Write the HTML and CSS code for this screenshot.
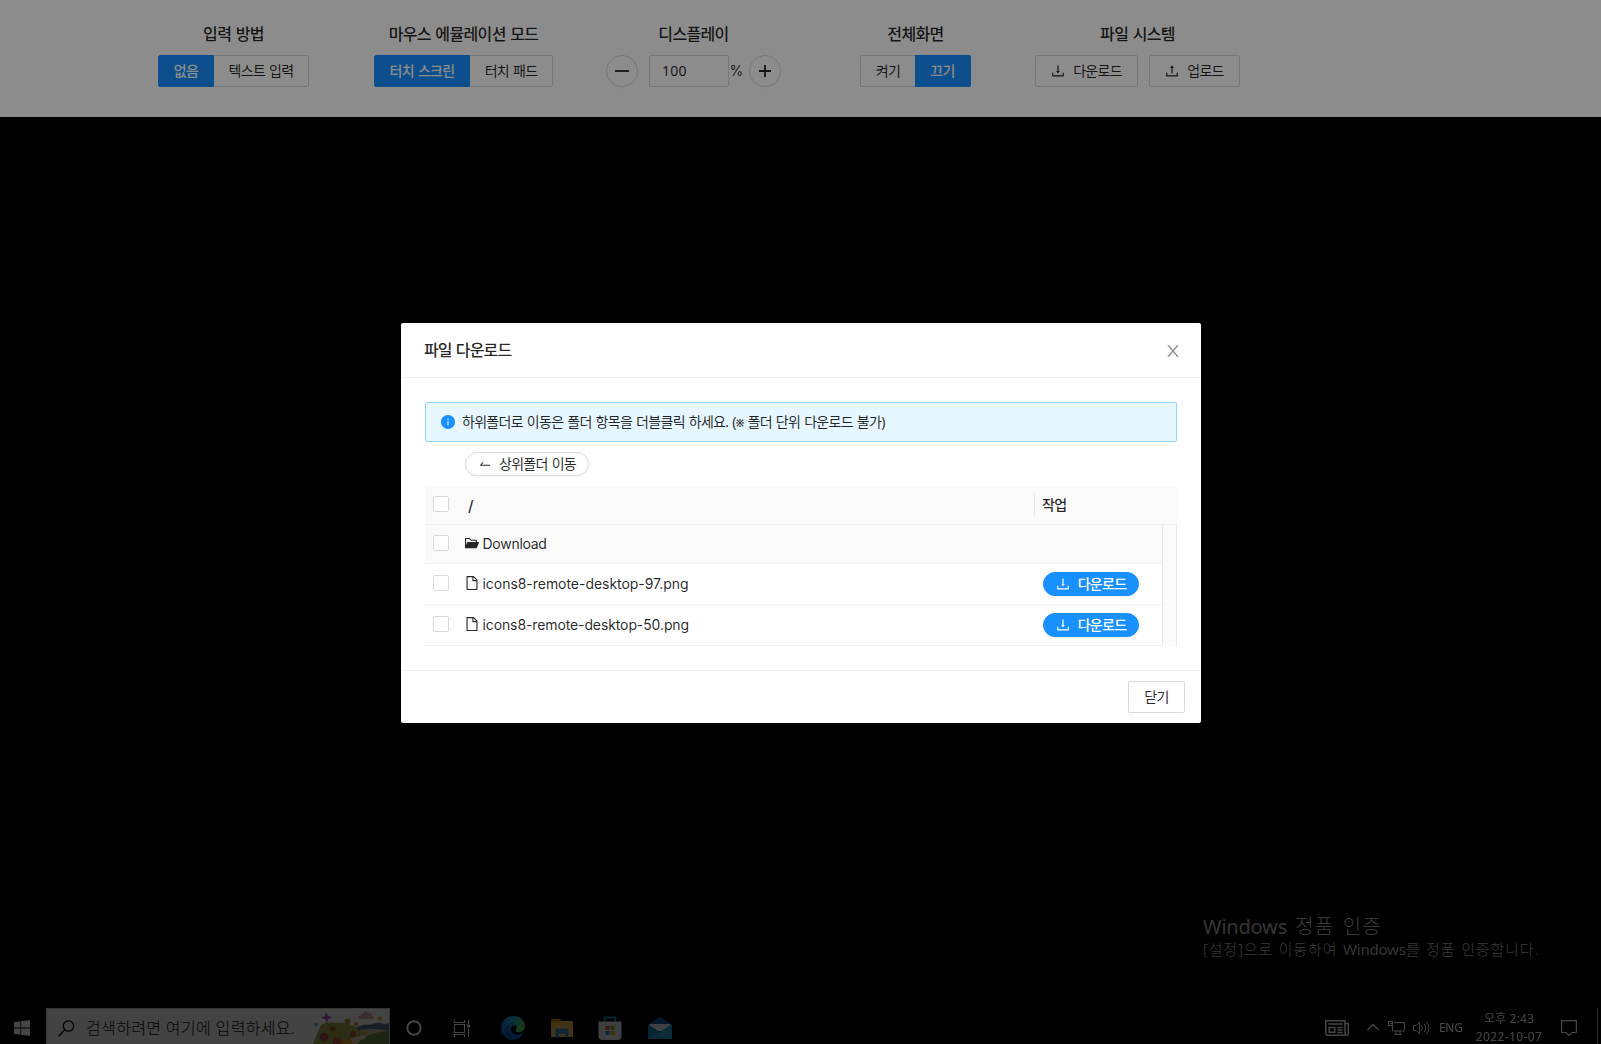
FILE: index.html
```html
<!DOCTYPE html>
<html lang="ko">
<head>
<meta charset="utf-8">
<title>파일 다운로드</title>
<link rel="stylesheet" href="styles.css">
</head>
<body>
<svg class="defs" width="0" height="0">
  <symbol id="tray-down" viewBox="64 64 896 896"><path d="M505.7 661a8 8 0 0012.6 0l112-141.7c4.1-5.2.4-12.9-6.3-12.9h-74.1V168c0-4.4-3.6-8-8-8h-60c-4.4 0-8 3.6-8 8v338.3H400c-6.7 0-10.4 7.7-6.3 12.9l112 141.8zM878 626h-60c-4.4 0-8 3.6-8 8v154H214V634c0-4.4-3.6-8-8-8h-60c-4.4 0-8 3.6-8 8v198c0 17.7 14.3 32 32 32h684c17.7 0 32-14.3 32-32V634c0-4.4-3.6-8-8-8z"/></symbol>
  <symbol id="tray-up" viewBox="64 64 896 896"><path d="M400 317.7h73.9V656c0 4.4 3.6 8 8 8h60c4.4 0 8-3.6 8-8V317.7H624c6.7 0 10.4-7.7 6.3-12.9L518.3 163a8 8 0 00-12.6 0l-112 141.7c-4.1 5.3-.4 13 6.3 13zM878 626h-60c-4.4 0-8 3.6-8 8v154H214V634c0-4.4-3.6-8-8-8h-60c-4.4 0-8 3.6-8 8v198c0 17.7 14.3 32 32 32h684c17.7 0 32-14.3 32-32V634c0-4.4-3.6-8-8-8z"/></symbol>
  <symbol id="file" viewBox="64 64 896 896"><path d="M854.6 288.6L639.4 73.4c-6-6-14.1-9.4-22.6-9.4H192c-17.7 0-32 14.3-32 32v832c0 17.7 14.3 32 32 32h640c17.7 0 32-14.3 32-32V311.3c0-8.5-3.4-16.7-9.4-22.7zM790.2 326H602V137.8L790.2 326zm1.8 562H232V136h302v216a42 42 0 0042 42h216v494z"/></symbol>
</svg>
<div class="screen">
  <header class="toolbar">
    <section class="group g-input">
      <h2>입력 방법</h2>
      <div class="controls"><button class="seg first on w56">없음</button><button class="seg last w95">텍스트 입력</button></div>
    </section>
    <section class="group g-mouse">
      <h2>마우스 에뮬레이션 모드</h2>
      <div class="controls"><button class="seg first on w96">터치 스크린</button><button class="seg last w83">터치 패드</button></div>
    </section>
    <section class="group g-display">
      <h2>디스플레이</h2>
      <div class="controls">
        <button class="round"><svg width="16" height="16" viewBox="0 0 16 16"><path d="M1 8h14" stroke="currentColor" stroke-width="1.8"/></svg></button>
        <span class="scale">100</span><span class="percent">%</span>
        <button class="round"><svg width="16" height="16" viewBox="0 0 16 16"><path d="M2 8h12M8 2v12" stroke="currentColor" stroke-width="1.8"/></svg></button>
      </div>
    </section>
    <section class="group g-full">
      <h2>전체화면</h2>
      <div class="controls"><button class="seg first w55">켜기</button><button class="seg last on w56">끄기</button></div>
    </section>
    <section class="group g-files">
      <h2>파일 시스템</h2>
      <div class="controls files">
        <button class="btn w103"><svg class="ico"><use href="#tray-down"/></svg>다운로드</button>
        <button class="btn w91"><svg class="ico"><use href="#tray-up"/></svg>업로드</button>
      </div>
    </section>
  </header>

  <main class="desktop">
    <div class="watermark">
      <p class="wm-title"><span class="latin">Windows</span> 정품 인증</p>
      <p class="wm-text">[설정]으로 이동하여 <span class="latin">Windows</span>를 정품 인증합니다.</p>
    </div>
    <footer class="taskbar">
      <svg class="start" width="16" height="16" viewBox="0 0 16 16"><path fill="#fff" d="M0 2.2 6.4 1.3v6.3H0zM7.2 1.2 16 0v7.6H7.200zM0 8.400h6.400v6.300L0 13.800zM7.200 8.400H16V16l-8.800-1.200z"/></svg>
      <div class="search">
        <svg class="lens" width="17" height="17" viewBox="0 0 17 17" fill="none" stroke="#111" stroke-width="1.300"><circle cx="10.500" cy="6" r="5.200"/><path d="M6.700 9.800.6 16.200"/></svg>
        <span class="hint">검색하려면 여기에 입력하세요.</span>
        <svg class="scene" width="76" height="35" viewBox="0 0 76 35">
          <path fill="#5c708d" d="M42 19q10-5 15-3 8-4 14-1l6-1v14H42z"/>
          <path fill="#c9b99c" d="M40 22q20-4 37 0v13H36z"/>
          <path fill="#a0a44e" d="M0 35Q5 22 8 16q6-4 14-2 14-1 22 5 3 3 7 5-8 5-13 11z"/>
          <path fill="#6f8a46" d="M42 35q12-12 35-13v13z"/>
          <path fill="#dccbb0" d="M35 35q2-7 11-8 5-1 0-3l7 3q0 3-5 4l-4 4z"/>
          <path fill="#d9a0ad" d="M45 10q0-4 4-4 4-7 7-2 3 0 3 3 3 1 1 3z"/>
          <path fill="#ba48d6" d="m13 3 2 4 4 1-4 2-1 4-2-4-4-1 4-2z"/>
          <circle cx="3" cy="15.500" r="2" fill="#3fb6cb"/><circle cx="67" cy="9.500" r="2" fill="#eda812"/>
          <circle cx="34.500" cy="12.500" r="2.800" fill="#c08426"/><circle cx="43" cy="15" r="2" fill="#c9952b"/><circle cx="52" cy="24" r="2.500" fill="#c5a128"/>
          <circle cx="19.500" cy="20" r="2.800" fill="#a05a2c"/><circle cx="40" cy="25" r="3" fill="#a5592c"/>
          <circle cx="11" cy="28" r="4.300" fill="#ad4a4c"/><circle cx="24.500" cy="33" r="4.800" fill="#c0584a"/><circle cx="34" cy="36" r="6.500" fill="#dc9428"/>
        </svg>
      </div>
      <svg class="cortana" width="16" height="16" viewBox="0 0 16 16"><circle cx="8" cy="8" r="6.700" fill="none" stroke="#fff" stroke-width="2"/></svg>
      <svg class="taskview" width="18" height="17" viewBox="0 0 18 17" fill="none" stroke="#fff" stroke-width="1.100"><path d="M1.500 0v2.500h10V0M1.500 17v-2.500h10V17M1.500 4.500h10v8h-10zM15.500 0v4M15.500 9v8"/><path fill="#fff" stroke="none" d="M14 4.500h3v3h-3z"/></svg>
      <svg class="edge" width="24" height="24" viewBox="0 0 24 24">
        <defs><linearGradient id="eg" x1="0" y1="0" x2="1" y2=".5"><stop offset=".1" stop-color="#1b83d4"/><stop offset=".5" stop-color="#2bb2d8"/><stop offset="1" stop-color="#5fd04f"/></linearGradient><linearGradient id="eb" x1="0" y1="0" x2="0" y2="1"><stop offset="0" stop-color="#1689d8"/><stop offset="1" stop-color="#1169c4"/></linearGradient></defs>
        <path fill="url(#eb)" d="M0 11.500C1 6 6 4 10 5c5 1 6 5 5 7-1 2-1 3 0 4 2 2 6 1 8 0-2 5-6 8-11 8C5 24-.3 18 0 11.500z"/>
        <path fill="url(#eg)" d="M.1 11C1 4.500 6 0 12 0c7 0 12 5 12 10.500 0 4-3 5.800-6.500 5.800-2.500 0-3.500-1-2.500-2.300C17 9 13.500 6 9 6 5 6 1.500 8 .1 11z"/>
        <path fill="#12579f" d="M9.500 9.300C5 12 8 22 16 23.300 9 25.500 4 20 4 15.500c0-3 2.500-5.700 5.500-6.200z"/>
        <path fill="#000" d="M15 9.500q1 2-.3 4.200-.8 2 1.300 2.900 3 1 6.500-.8-3 4-8 2.700-5-2-4.500-6 .8-3.500 5-3z"/>
      </svg>
      <svg class="explorer" width="22" height="19" viewBox="0 0 22 19"><path fill="#c98b0a" d="M0 0h9l1.500 2H22v4H0z"/><path fill="#edbd58" d="M0 3.500h9L11 2h11v16H0z"/><path fill="#3b88cf" d="M4.500 18.500V11q0-1.500 1.500-1.500h10q1.500 0 1.500 1.500v7.500H14v-4H8v4z"/></svg>
      <svg class="store" width="24" height="24" viewBox="0 0 24 24"><path d="M6.500 6V1.500h11V6" fill="none" stroke="#168bc2" stroke-width="1.800"/><path fill="#e6e6e6" d="M.5 5.500h23V20q0 4-4 4h-15q-4 0-4-4z"/><path fill="#e8502d" d="M7.500 10h4v4h-4z"/><path fill="#78ad28" d="M12.500 10h4v4h-4z"/><path fill="#1696d2" d="M7.500 15h4v4h-4z"/><path fill="#e8ae20" d="M12.500 15h4v4h-4z"/></svg>
      <svg class="mail" width="24" height="22" viewBox="0 0 24 22"><path fill="#125aa0" d="M0 7.500 12 0l12 7.500V14H0z"/><path fill="#e8edf0" d="M2 7h20v7H2z"/><path fill="#2188bd" d="M0 7.500 12 15l12-7.500V22H0z"/><path fill="#2ba5d3" d="M24 7.500V22H0z"/><path fill="#e8edf0" d="m2 7.200 20 0L12 14.500z"/></svg>
      <div class="tray">
        <svg class="news" width="24" height="16" viewBox="0 0 24 16" fill="none" stroke="#fff" stroke-width="1.500"><path d="M20 15.200H2.500Q.8 15.200.8 13.500V.8H20v12.700q0 1.700 1.700 1.700t1.600-1.700V3.500H20M3.500 4h14M12.500 7.500h5M12.500 10h5M12.500 12.500h5"/><path d="M4.200 7.500h5.600v4.700H4.200z"/></svg>
        <svg class="chev" width="12" height="8" viewBox="0 0 12 8" fill="none" stroke="#fff" stroke-width="1.300"><path d="m.5 7 5.500-5.500L11.500 7"/></svg>
        <svg class="net" width="17" height="14" viewBox="0 0 17 14" fill="none" stroke="#fff"><path d="M6 1.500h10.500v8.500H4.500V5M8 10v3M12 10v3M6 13.500h8M.5.500h4v4h-4zM2 2.500h2"/></svg>
        <svg class="vol" width="17" height="14" viewBox="0 0 17 14" fill="none" stroke="#fff"><path d="M.5 4.500h2.500l3.500-3.500v12L3 9.500H.5zM8.500 4.500q2 2.500 0 5M11 2.800q3.400 4.200 0 8.400M13.500 1q5 6 0 12"/></svg>
        <span class="lang">ENG</span>
        <div class="clock"><span>오후 2:43</span><span class="date">2022-10-07</span></div>
        <svg class="note" width="16" height="17" viewBox="0 0 16 17" fill="none" stroke="#fff" stroke-width="1.200"><path d="M.6.600h14.800v11.900H11L8 15.500l-3-3H.6z"/></svg>
        <i class="peek"></i>
      </div>
    </footer>
  </main>
</div>

<div class="mask">
  <div class="modal">
    <div class="modal-head">
      <span class="modal-title">파일 다운로드</span>
      <svg class="close" viewBox="64 64 896 896"><path d="M563.8 512l262.5-312.900c4.400-5.200.7-13.100-6.100-13.100h-79.800c-4.700 0-9.200 2.100-12.300 5.700L511.600 449.800 295.100 191.700c-3-3.600-7.500-5.700-12.300-5.700H203c-6.800 0-10.500 7.900-6.100 13.100L459.400 512 196.900 824.900A7.950 7.950 0 00203 838h79.800c4.700 0 9.200-2.100 12.300-5.700l216.500-258.100 216.500 258.100c3 3.600 7.500 5.700 12.300 5.700h79.800c6.800 0 10.500-7.900 6.100-13.100L563.800 512z"/></svg>
    </div>
    <div class="modal-body">
      <div class="alert">
        <svg class="info" viewBox="64 64 896 896"><path d="M512 64C264.600 64 64 264.600 64 512s200.600 448 448 448 448-200.600 448-448S759.400 64 512 64zm32 664c0 4.400-3.600 8-8 8h-48c-4.400 0-8-3.600-8-8V456c0-4.400 3.600-8 8-8h48c4.400 0 8 3.600 8 8v272zm-32-344a48.010 48.010 0 010-96 48.010 48.010 0 010 96z"/></svg>
        <span>하위폴더로 이동은 폴더 항목을 더블클릭 하세요. (<span class="mark">※</span> 폴더 단위 다운로드 불가)</span>
      </div>
      <button class="up"><svg class="ico" viewBox="0 0 1024 1024"><path d="M872 572H266.800l144.300-183c4.100-5.200.4-13-6.300-13H340c-9.800 0-19.100 4.500-25.100 12.200l-164 208c-16.500 21-1.600 51.800 25.100 51.800h696c4.400 0 8-3.600 8-8v-60c0-4.400-3.600-8-8-8z"/></svg>상위폴더 이동</button>
      <div class="table">
        <div class="thead">
          <i class="check"></i><span class="path">/</span><span class="work">작업</span>
        </div>
        <div class="tbody">
          <div class="rows">
            <div class="row folder"><i class="check"></i><svg class="ico" viewBox="64 64 896 896"><path d="M928 444H820V330.400c0-17.700-14.300-32-32-32H473L355.700 186.200a8.150 8.150 0 00-5.500-2.200H96c-17.700 0-32 14.300-32 32v592c0 17.700 14.300 32 32 32h698c13 0 24.800-7.900 29.700-20l134-332c1.500-3.800 2.300-7.900 2.300-12 0-17.700-14.300-32-32-32zm-180 0H238c-13 0-24.800 7.900-29.700 20L136 643.200V256h188.500l119.600 114.400H748V444z"/></svg><span class="name">Download</span></div>
            <div class="row"><i class="check"></i><svg class="ico"><use href="#file"/></svg><span class="name loose">icons8-remote-desktop-97.png</span><button class="pill"><svg class="ico"><use href="#tray-down"/></svg>다운로드</button></div>
            <div class="row"><i class="check"></i><svg class="ico"><use href="#file"/></svg><span class="name">icons8-remote-desktop-50.png</span><button class="pill"><svg class="ico"><use href="#tray-down"/></svg>다운로드</button></div>
          </div>
          <div class="gutter"></div>
        </div>
      </div>
    </div>
    <div class="modal-foot"><button class="btn w57">닫기</button></div>
  </div>
</div>
</body>
</html>
```
FILE: styles.css
```css
* { box-sizing: border-box; }
body {
  margin: 0;
  height: 1044px;
  overflow: hidden;
  background: #000;
  color: rgba(0, 0, 0, .85);
  font: 14px/22px "Noto Sans", "Noto Sans CJK KR", sans-serif;
}
.defs { display: block; position: absolute; }
h2, p { margin: 0; }
svg { display: block; flex: none; }
button {
  display: flex;
  align-items: center;
  justify-content: center;
  height: 32px;
  padding: 0;
  background: #fff;
  border: 1px solid #d9d9d9;
  border-radius: 2px;
  color: inherit;
  font: 14px/20px "Noto Sans", "Noto Sans CJK KR", sans-serif;
  letter-spacing: -.7px;
  word-spacing: 1px;
  white-space: nowrap;
}
.ico { width: 14px; height: 14px; fill: currentColor; }

.screen { display: flex; flex-direction: column; height: 1044px; }
.toolbar {
  display: flex;
  height: 117px;
  padding: 22px 0 0 158px;
  background: #fff;
}
.group { flex: none; }
.group h2 {
  height: 33px;
  font-size: 16px;
  line-height: 24px;
  font-weight: 500;
  letter-spacing: -.65px;
  word-spacing: 1px;
  text-align: center;
  white-space: nowrap;
}
.controls { display: flex; align-items: center; }
.g-input { width: 151px; }
.g-mouse { width: 179px; margin-left: 65px; }
.g-display { width: 175px; margin-left: 53px; }
.g-full { width: 111px; margin-left: 79px; }
.g-files { width: 205px; margin-left: 64px; }
.seg.first { border-radius: 2px 0 0 2px; }
.seg.last { border-radius: 0 2px 2px 0; border-left: 0; }
.seg.on { background: #1890ff; border-color: #1890ff; color: #fff; font-weight: 500; }
.seg.first:not(.on) { border-right: 0; }
.w55 { width: 55px; }
.w56 { width: 56px; }
.w57 { width: 57px; }
.w83 { width: 83px; }
.w91 { width: 91px; }
.w95 { width: 95px; }
.w96 { width: 96px; }
.w103 { width: 103px; }
.round { width: 32px; border-radius: 16px; box-shadow: 0 2px 0 rgba(0, 0, 0, .02); }
.scale {
  width: 80px;
  height: 32px;
  margin-left: 11px;
  padding-left: 12px;
  border: 1px solid #d9d9d9;
  border-radius: 2px;
  letter-spacing: .3px;
  line-height: 30px;
}
.percent { width: 20px; padding-left: .5px; font-family: Inter, sans-serif; font-size: 14px; }
.files { gap: 11px; }
.btn .ico { margin-right: 8px; }

.desktop {
  display: flex;
  flex: 1;
  flex-direction: column;
  justify-content: flex-end;
  background: #000;
}
.watermark { margin: 0 0 49px 1203px; color: #6a6a6a; }
.wm-title { font-size: 20px; line-height: 25px; letter-spacing: 1.100px; word-spacing: 2px; }
.wm-text { font-size: 15px; line-height: 20px; letter-spacing: .85px; word-spacing: 1px; }
.wm-title, .wm-text { font-weight: 300; white-space: nowrap; }
.latin { color: #606060; font-weight: 400; }
.wm-title .latin { letter-spacing: -.200px; }
.wm-text .latin { letter-spacing: -.2px; }
.taskbar { display: flex; height: 36px; padding-left: 14px; opacity: .5; }
.start { margin-top: 12px; }
.search {
  display: flex;
  width: 344px;
  height: 36px;
  margin-left: 16px;
  padding-left: 11px;
  background: #f4f4f4;
  border: 1px solid #c0c0c0;
  border-bottom: 0;
  color: #111;
}
.lens { margin-top: 11px; }
.hint { width: 213px; margin: 8px 0 0 11px; font-size: 16px; font-weight: 300; letter-spacing: .35px; white-space: nowrap; }
.scene { margin-left: 14px; }
.cortana { margin: 12px 0 0 16px; }
.taskview { margin: 12px 0 0 31px; }
.edge { margin: 8px 0 0 30px; }
.explorer { margin: 11px 0 0 26px; }
.store { margin: 8px 0 0 25px; }
.mail { margin: 9px 0 0 26px; }
.tray { display: flex; margin-left: 653px; color: #fff; }
.news { margin-top: 12px; }
.chev { margin: 15px 0 0 18px; }
.net { margin: 13px 0 0 9px; }
.vol { margin: 13px 0 0 8px; }
.lang { width: 24px; margin: 9px 0 0 9px; font-size: 12px; letter-spacing: -.3px; }
.clock {
  display: flex;
  flex-direction: column;
  width: 72px;
  margin-left: 10px;
  padding-top: 2px;
  font-size: 12px;
  line-height: 18px;
  letter-spacing: .15px;
  text-align: center;
  white-space: nowrap;
}
.date { letter-spacing: .4px; }
.note { margin: 12px 0 0 16px; }
.peek { width: 1px; margin-left: 20px; background: #999; }

.mask {
  position: fixed;
  inset: 0;
  padding: 323px 0 0 401px;
  background: rgba(0, 0, 0, .45);
}
.modal { width: 800px; height: 400px; background: #fff; border-radius: 2px; }
.modal-head {
  display: flex;
  align-items: center;
  justify-content: space-between;
  height: 55px;
  padding: 0 20px 0 23px;
  border-bottom: 1px solid #f0f0f0;
}
.modal-title { font-size: 16px; font-weight: 500; letter-spacing: -.85px; word-spacing: .8px; }
.close { width: 16px; height: 16px; margin-top: 2px; fill: rgba(0, 0, 0, .45); }
.modal-body { height: 292px; padding: 24px; }
.alert {
  display: flex;
  align-items: center;
  height: 40px;
  padding-left: 15px;
  background: #e6f7ff;
  border: 1px solid #91d5ff;
  border-radius: 2px;
  letter-spacing: -.7px;
  word-spacing: 1px;
  white-space: nowrap;
}
.info { width: 14px; height: 14px; margin-right: 7px; fill: #1890ff; }
.mark { font-size: 10px; font-weight: 700; }
.up { width: 124px; height: 24px; margin: 10px 0 10px 40px; border-radius: 12px; box-shadow: 0 2px 0 rgba(0, 0, 0, .02); }
.up .ico { margin-right: 7px; }
.thead {
  display: flex;
  align-items: center;
  height: 39px;
  padding-left: 8px;
  background: #fafafa;
  border-bottom: 1px solid #f0f0f0;
  font-weight: 500;
}
.check { width: 16px; height: 16px; margin: -2px 16px 0 0; background: #fff; border: 1px solid #d9d9d9; border-radius: 2px; flex: none; }
.path { width: 569px; padding: 1px 0 0 3px; font-family: Inter, sans-serif; font-size: 15px; }
.work { height: 22px; padding-left: 7px; border-left: 1px solid #e8e8e8; line-height: 22px; letter-spacing: -.7px; }
.tbody { display: flex; }
.rows { width: 737px; }
.row { display: flex; align-items: center; height: 41px; padding-left: 8px; border-bottom: 1px solid #f0f0f0; }
.row.folder { height: 39px; background: #fafafa; }
.row .ico { margin: -3px 0 0; }
.name { width: 560px; padding-left: 3.500px; font-family: Inter, sans-serif; letter-spacing: -.11px; }
.name.loose { letter-spacing: -.04px; }
.folder .name { letter-spacing: -.27px; }
.pill {
  width: 96px;
  height: 24px;
  margin-left: 4px;
  background: #1890ff;
  border-color: #1890ff;
  border-radius: 12px;
  color: #fff;
  font-weight: 500;
  box-shadow: 0 2px 0 rgba(0, 0, 0, .04);
}
.row .pill .ico { margin: -1px 8px 0 0; }
.gutter { width: 15px; background: #fafafa; border: 1px solid #e8e8e8; border-width: 0 1px; }
.modal-foot {
  display: flex;
  align-items: center;
  justify-content: flex-end;
  height: 53px;
  padding-right: 16px;
  border-top: 1px solid #f0f0f0;
}
```
